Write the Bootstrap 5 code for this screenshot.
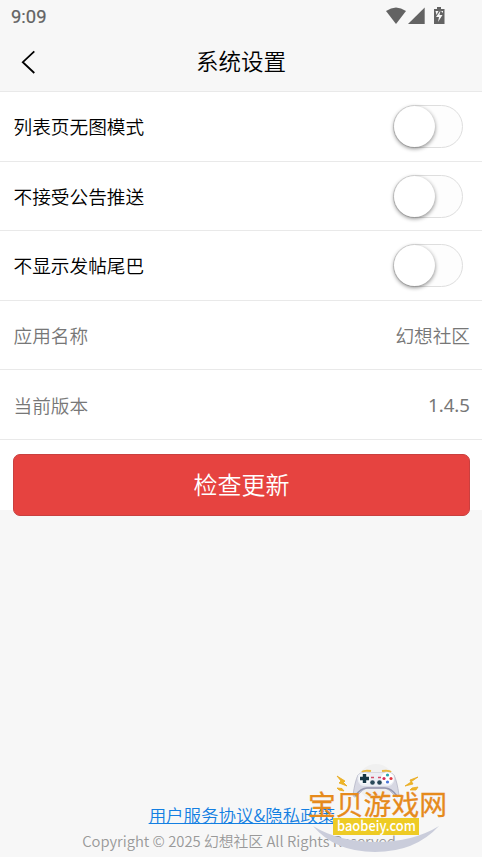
<!DOCTYPE html>
<html lang="zh-CN">
<head>
<meta charset="utf-8">
<meta name="viewport" content="width=device-width, initial-scale=1">
<title>系统设置</title>
<link href="https://cdn.jsdelivr.net/npm/bootstrap@5.3.0/dist/css/bootstrap.min.css" rel="stylesheet">
<style>
html,body{height:100%}
body{font-family:"Noto Sans CJK SC",sans-serif;font-weight:350;background:#f7f7f7;color:#000;overflow:hidden}
.screen{height:857px}
.status-bar{height:32px;padding:0 35px 0 11px;color:#636363;font:400 18.4px/33px Roboto,sans-serif;-webkit-text-stroke:.2px #636363}
.title-bar{height:59px;font-size:22.5px;line-height:57px}
.back-btn{left:19px;top:17px;line-height:0}
.settings{height:419px;border-top:1px solid #e9e9e9}
.setting-row{height:69.6px;padding:0 12px 0 13.5px;border:0;border-bottom:1.5px solid #e9e9e9!important;border-radius:0;font-size:18.67px;line-height:28px;background:#fff;color:#000}
.setting-row.info{color:#777}
.version{font-family:"Noto Sans",sans-serif;font-weight:400}
.toggle{width:70px;height:43px;margin:1px 7px 0 0;border:1.5px solid #dedede;border-radius:22px;background:#fdfdfd}
.knob{width:41px;height:41px;border-radius:50%;background:#fff;box-shadow:0 1.5px 4px rgba(0,0,0,.48)}
.update-btn{height:62px;margin:14px 12px 0 13px;border:1px solid #c9403f;border-radius:7px;background:#e64340;color:#fff;font-size:24px;font-weight:350;line-height:56px;padding:0 0 2px}
.update-btn:hover{background:#d93d3a;color:#fff}
.terms{color:#147fe2;font-size:17.5px;line-height:26px;margin-left:2px}
.copyright{color:#999;font-size:14.8px;line-height:26px;margin-right:4px;padding-bottom:3px;white-space:nowrap}
.site-mark{left:296px;top:755px;pointer-events:none}
</style>
<script src="https://cdn.jsdelivr.net/npm/bootstrap@5.3.0/dist/js/bootstrap.bundle.min.js"></script>
</head>
<body>
<div class="screen d-flex flex-column position-relative">
<div class="status-bar d-flex justify-content-between">
<span>9:09</span>
<svg width="62" height="32" viewBox="385 0 62 32" fill="#636363"><path d="M386 11Q396 3.8 406 11L396 24Z"/><path d="M424.7 7.5V24H408Z"/><path d="M434 9h3V7h4v2h3.5v15H434Z"/><path d="M440.5 10.5L436 17h3l-1 5 4.5-7h-3ZM435.5 11h3l-2 4ZM441 11h2v2Z" fill="#f7f7f7"/></svg>
</div>
<header class="title-bar text-center position-relative">
<button class="back-btn btn border-0 p-0 position-absolute" aria-label="返回"><svg width="18" height="26" viewBox="0 0 18 26" fill="none" stroke="#000" stroke-width="1.8"><path d="M15.3 2.3L3.8 13.2 15.3 24"/></svg></button>
系统设置
</header>
<main class="settings bg-white">
<div class="list-group list-group-flush">
<div class="list-group-item setting-row d-flex align-items-center justify-content-between"><span>列表页无图模式</span><div class="toggle" role="switch" aria-checked="false"><div class="knob"></div></div></div>
<div class="list-group-item setting-row d-flex align-items-center justify-content-between"><span>不接受公告推送</span><div class="toggle" role="switch" aria-checked="false"><div class="knob"></div></div></div>
<div class="list-group-item setting-row d-flex align-items-center justify-content-between"><span>不显示发帖尾巴</span><div class="toggle" role="switch" aria-checked="false"><div class="knob"></div></div></div>
<div class="list-group-item setting-row info d-flex align-items-center justify-content-between"><span>应用名称</span><span>幻想社区</span></div>
<div class="list-group-item setting-row info d-flex align-items-center justify-content-between"><span>当前版本</span><span class="version">1.4.5</span></div>
</div>
<div class="d-grid"><button class="btn update-btn">检查更新</button></div>
</main>
<footer class="mt-auto text-center">
<a class="terms text-decoration-underline" href="#">用户服务协议&amp;隐私政策</a>
<div class="copyright">Copyright © 2025 幻想社区 All Rights Reserved</div>
</footer>
<svg class="site-mark position-absolute" width="160" height="102" viewBox="0 0 160 102">
<circle cx="80" cy="27" r="18" fill="#f0f0f0"/>
<path d="M17 71Q43 87 80 87T143 71Q119 97 79 97T17 71Z" fill="#cacddb"/>
<path d="M66 17q2-2 9-1M86 16q7-1 9 1" fill="none" stroke="#e9b73d" stroke-width="2"/>
<path d="M62 20Q66 16 74 18H86Q94 16 98 20Q101 26 103 40Q102 44 98 40Q93 34 89 33H71Q67 34 62 40Q58 44 57 40Q59 26 62 20Z" fill="#d7d8e3" stroke="#b5b6c6" stroke-width=".8"/>
<path d="M62 20Q66 16 74 18H86Q94 16 98 20Q100 29 93 31H67Q60 29 62 20Z" fill="#eceef4"/>
<path d="M59 41Q65 33 71 33H89Q95 33 101 41" fill="none" stroke="#9697ae" stroke-width="1.6"/>
<circle cx="68.5" cy="23.5" r="5.8" fill="#f9fafc"/><circle cx="91.5" cy="23.5" r="6.2" fill="#fff"/>
<path d="M68.5 19v9M64 23.5h9" stroke="#183746" stroke-width="3.4"/>
<circle cx="91.5" cy="20" r="1.6" fill="#2aa7ac"/><circle cx="91.5" cy="27" r="1.6" fill="#4b78db"/><circle cx="88" cy="23.5" r="1.6" fill="#d62d5c"/><circle cx="95" cy="23.5" r="1.6" fill="#e13741"/>
<path d="M75 22.5h3M82 22.5h3" stroke="#d34c68" stroke-width="1.3"/>
<circle cx="76.5" cy="27.5" r="2.3" fill="#294858"/><circle cx="83.5" cy="27.5" r="2.3" fill="#294858"/>
<path d="M41 21L49 26 47.5 27.5 51 31 43 28 45 26ZM41 33L46 33.5 48 36 43 35ZM122 22L114 25 115 27 109 31 117 29 115.5 26.5ZM122 32L116 33 114 35 120 35Z" fill="#eeb626" stroke="#e8a920" stroke-width=".8"/>
<text x="12" y="60" font-family="Noto Sans CJK SC" font-size="27.8" font-weight="400" fill="#e68a1c" stroke="#e68a1c" stroke-width=".3" textLength="139">宝贝游戏网</text>
<rect x="37" y="63" width="86" height="17" fill="#eecb24"/>
<text x="41" y="76.3" font-family="Noto Sans CJK SC" font-size="14.5" font-weight="500" fill="#fff" textLength="79" lengthAdjust="spacingAndGlyphs">baobeiy.com</text>
</svg>
</div>
</body>
</html>
